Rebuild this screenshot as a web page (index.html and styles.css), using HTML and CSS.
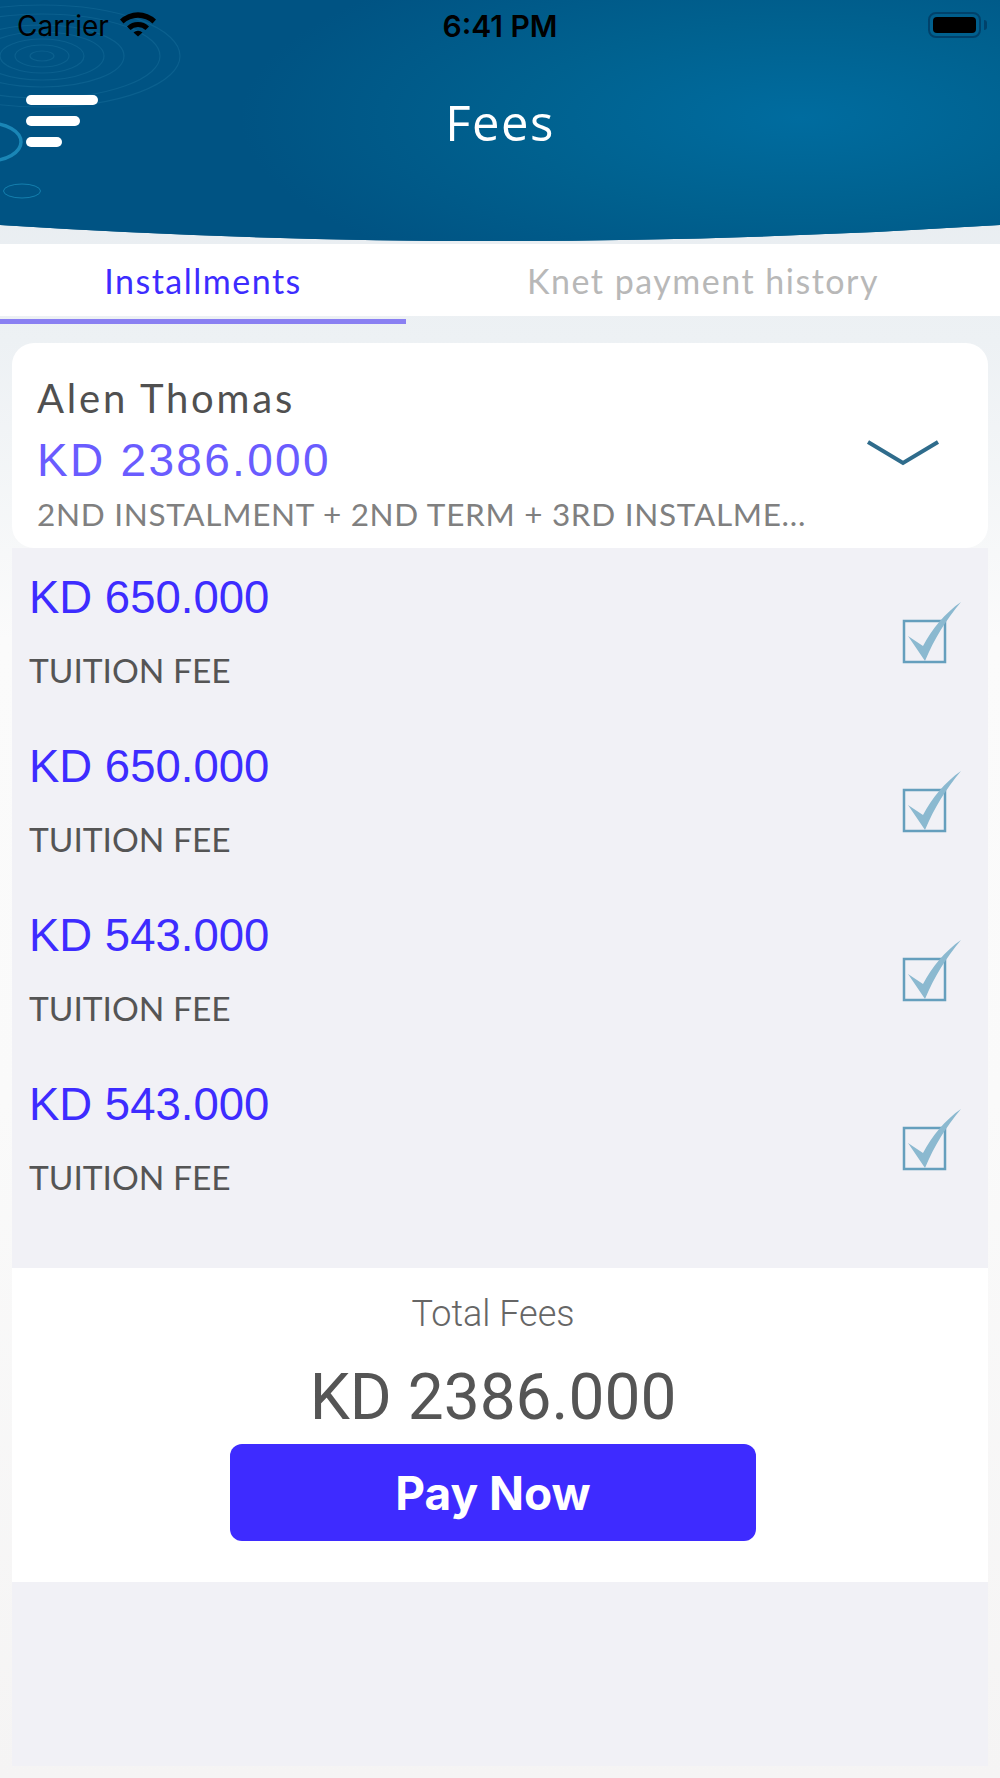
FILE: index.html
```html
<!DOCTYPE html>
<html lang="en">
<head>
  <meta charset="UTF-8">
  <title>Fees</title>
  <meta name="viewport" content="width=device-width, initial-scale=1.0">
  <link rel="stylesheet" href="styles.css">
</head>
<body>
  <div class="page">
    <header class="app-header">
      <!-- ripple rings behind the status bar -->
      <svg class="rings" width="300" height="240" viewBox="0 0 300 240" fill="none">
        <g stroke="#3f9cc4" stroke-opacity="0.18" stroke-width="1.2">
          <ellipse cx="42" cy="56" rx="12" ry="5"/>
          <ellipse cx="42" cy="56" rx="27" ry="11"/>
          <ellipse cx="42" cy="56" rx="42" ry="17"/>
          <ellipse cx="42" cy="56" rx="62" ry="24"/>
          <ellipse cx="42" cy="56" rx="82" ry="31"/>
          <ellipse cx="42" cy="56" rx="118" ry="42"/>
          <ellipse cx="42" cy="56" rx="138" ry="51"/>
        </g>
        <ellipse cx="-12" cy="142" rx="33" ry="19" stroke="#1a86b6" stroke-width="3.500"/>
        <ellipse cx="22" cy="191" rx="18.500" ry="7" stroke="#147fae" stroke-width="1"/>
      </svg>

      <div class="status-bar">
        <div class="status-left">
          <span>Carrier</span>
          <svg width="38" height="28" viewBox="0 0 38 28">
            <path d="M1 10.500A26 26 0 0 1 37 10.500L33.500 14.500A21 21 0 0 0 4.500 14.500Z"/>
            <path d="M8 17.500A16 16 0 0 1 30 17.500L26.500 21A11 11 0 0 0 11.500 21Z"/>
            <path d="M14.500 23.500A7 7 0 0 1 23.500 23.500L19 27.500Z"/>
          </svg>
        </div>
        <span class="status-time">6:41 PM</span>
        <div class="battery"><span class="battery-fill"></span></div>
      </div>

      <div class="title-bar">
        <button class="menu-btn" aria-label="Menu">
          <span class="bar-long"></span>
          <span class="bar-mid"></span>
          <span class="bar-short"></span>
        </button>
        <h1>Fees</h1>
      </div>
    </header>

    <nav class="tabs">
      <a class="tab tab-active">Installments</a>
      <a class="tab">Knet payment history</a>
    </nav>
    <div class="tab-rule"></div>

    <main class="content">
      <section class="student-card">
        <div class="student-info">
          <div class="student-name">Alen Thomas</div>
          <div class="student-amount">KD 2386.000</div>
          <div class="student-desc">2ND INSTALMENT + 2ND TERM + 3RD INSTALME...</div>
        </div>
        <svg class="chevron" width="74" height="27" viewBox="0 0 74 27" fill="none">
          <path d="M2 3L37 24L72 3" stroke="#2f6c8c" stroke-width="4"/>
        </svg>
      </section>

      <section class="fee-list">
        <div class="fee-row">
          <div>
            <div class="fee-amount">KD 650.000</div>
            <div class="fee-label">TUITION FEE</div>
          </div>
          <svg class="tick" width="60" height="66" viewBox="0 0 60 66" fill="none">
            <rect x="2" y="20" width="41" height="41" stroke="#659fbd" stroke-width="2.500"/>
            <path d="M6 35L21 45C30 28 43 12 59 1C44 19 32 38 23 60Z" fill="#8bb9d0"/>
          </svg>
        </div>
        <div class="fee-row">
          <div>
            <div class="fee-amount">KD 650.000</div>
            <div class="fee-label">TUITION FEE</div>
          </div>
          <svg class="tick" width="60" height="66" viewBox="0 0 60 66" fill="none">
            <rect x="2" y="20" width="41" height="41" stroke="#659fbd" stroke-width="2.500"/>
            <path d="M6 35L21 45C30 28 43 12 59 1C44 19 32 38 23 60Z" fill="#8bb9d0"/>
          </svg>
        </div>
        <div class="fee-row">
          <div>
            <div class="fee-amount">KD 543.000</div>
            <div class="fee-label">TUITION FEE</div>
          </div>
          <svg class="tick" width="60" height="66" viewBox="0 0 60 66" fill="none">
            <rect x="2" y="20" width="41" height="41" stroke="#659fbd" stroke-width="2.500"/>
            <path d="M6 35L21 45C30 28 43 12 59 1C44 19 32 38 23 60Z" fill="#8bb9d0"/>
          </svg>
        </div>
        <div class="fee-row">
          <div>
            <div class="fee-amount">KD 543.000</div>
            <div class="fee-label">TUITION FEE</div>
          </div>
          <svg class="tick" width="60" height="66" viewBox="0 0 60 66" fill="none">
            <rect x="2" y="20" width="41" height="41" stroke="#659fbd" stroke-width="2.500"/>
            <path d="M6 35L21 45C30 28 43 12 59 1C44 19 32 38 23 60Z" fill="#8bb9d0"/>
          </svg>
        </div>
      </section>

      <section class="total-box">
        <div class="total-label">Total Fees</div>
        <div class="total-amount">KD 2386.000</div>
        <button class="pay-btn">Pay Now</button>
      </section>

      <div class="panel-rest"></div>
    </main>
  </div>
</body>
</html>
```

FILE: styles.css
```css
* { box-sizing: border-box; }
body { margin: 0; font-family: 'Lato', 'Liberation Sans', sans-serif; }
.page { width: 1000px; height: 1778px; display: flex; flex-direction: column; background: linear-gradient(180deg, #e3e8ed 0, #edf1f4 340px, #fbfbfb 640px, #fafafa 1100px, #f5f4f4 1778px); }

/* header */
.app-header { position: relative; height: 244px; overflow: hidden; clip-path: path('M0 0H1000V225Q500 257 0 225Z'); background: radial-gradient(ellipse 560px 190px at 800px 118px, #006c9f 0, #00618f 50%, #005383 100%); background-color: #005383; }
.rings { position: absolute; left: 0; top: 0; }
.status-bar { position: relative; height: 46px; padding: 6px 17px 0; display: grid; grid-template-columns: 1fr auto 1fr; align-items: center; font-family: 'Inter', 'Liberation Sans', sans-serif; font-size: 28px; color: #000; }
.status-left { display: flex; align-items: center; gap: 10px; }
.status-left svg { margin-top: -6px; }
.status-time { font-size: 30px; font-weight: 600; }
.battery { justify-self: end; position: relative; width: 53px; height: 26px; padding: 3px; margin-right: 2px; margin-top: -2px; border: 2px solid #00426b; border-radius: 8px; }
.battery::after { content: ''; position: absolute; right: -8px; top: 6px; width: 3px; height: 10px; background: #00426b; border-radius: 0 3px 3px 0; }
.battery-fill { display: block; height: 100%; background: #000; border-radius: 4px; }
.title-bar { position: relative; display: grid; grid-template-columns: 1fr auto 1fr; padding: 0 26px; height: 110px; align-items: start; }
.menu-btn { display: flex; flex-direction: column; gap: 12px; padding: 0; margin-top: 49px; background: none; border: none; }
.menu-btn span { display: block; height: 10px; background: #fff; border-radius: 5px; }
.bar-long { width: 72px; }
.bar-mid { width: 54px; margin-top: -1px; }
.bar-short { width: 36px; margin-top: -1px; }
h1 { margin: 43px 0 0; font-family: 'Open Sans', 'Liberation Sans', sans-serif; font-size: 49px; line-height: 66px; letter-spacing: 1.5px; font-weight: 400; color: #fff; }

/* tabs */
.tabs { display: grid; grid-template-columns: 406px 1fr; height: 72px; background: #fff; }
.tab { display: flex; align-items: center; justify-content: center; font-size: 34px; letter-spacing: 1.5px; color: #b8b8b8; }
.tab-active { color: #3d2cff; }
.tab-rule { width: 406px; height: 5px; margin-top: 3px; background: #8a80f2; }

.content { flex: 1; display: flex; flex-direction: column; margin: 19px 12px 12px; }

/* student summary */
.student-card { display: flex; align-items: flex-start; height: 205px; padding: 30px 48px 0 25px; background: #fff; border-radius: 22px; }
.student-info { flex: 1; min-width: 0; white-space: nowrap; }
.student-name { font-size: 40px; line-height: 50px; letter-spacing: 2.800px; color: #505050; }
.student-amount { margin-top: 10px; font-family: 'Liberation Sans', sans-serif; font-size: 46px; line-height: 54px; letter-spacing: 2.300px; color: #6a5cff; }
.student-desc { margin-top: 6px; font-size: 31.500px; line-height: 42px; letter-spacing: 0.7px; color: #808080; }
.chevron { margin-top: 66px; }

/* fee rows */
.fee-list { height: 720px; padding: 25px 26px 0 17px; background: #f1f1f6; }
.fee-row { display: flex; justify-content: space-between; height: 169px; }
.fee-amount { font-family: 'Liberation Sans', sans-serif; font-size: 45.500px; line-height: 50px; color: #3d2cff; }
.fee-label { margin-top: 27px; font-size: 33.500px; line-height: 40px; color: #555; }
.tick { margin-top: 28px; }

/* totals */
.total-box { display: flex; flex-direction: column; align-items: center; height: 314px; padding-right: 14px; background: #fff; font-family: 'Roboto', 'Liberation Sans', sans-serif; }
.total-label { margin-top: 24px; font-size: 36px; line-height: 44px; font-weight: 300; color: #666; }
.total-amount { margin-top: 27px; font-size: 64px; line-height: 70px; color: #555; }
.pay-btn { width: 526px; height: 97px; margin-top: 11px; background: #3e2bff; border: none; border-radius: 12px; font-family: 'Inter', 'Liberation Sans', sans-serif; font-size: 46px; font-weight: 700; color: #fff; }
.panel-rest { flex: 1; background: #f1f1f6; }
```
